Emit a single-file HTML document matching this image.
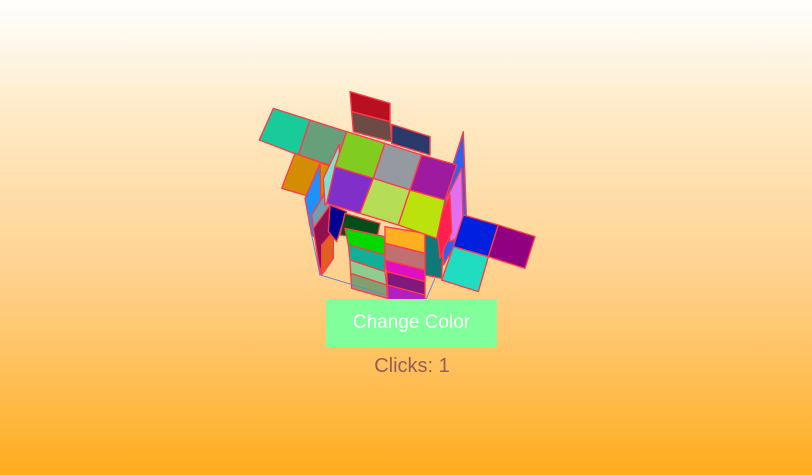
<!DOCTYPE html>
<html><head><style>
html,body{margin:0;padding:0}
body{width:812px;height:475px;overflow:hidden;position:relative;background:linear-gradient(#fff 0%,#ffe9c4 25%,#ffd08a 60%,#ffac1c 100%);font-family:"Liberation Sans",sans-serif}
svg{position:absolute;left:250px;top:85px}
.btn{position:absolute;left:326px;top:299px;width:171px;height:48px;background:#80ff9a;color:#fff;font-size:19px;line-height:48px;text-align:center}
.clk{position:absolute;left:312px;top:355px;width:200px;text-align:center;font-size:20px;color:#9a5a5a}
</style></head><body>
<svg width="300" height="220" viewBox="0 0 900 660">
<g stroke="#ff3a4a" stroke-width="4" stroke-linejoin="round">
<polygon points="70,70 180,105 145,210 28,165" fill="#1acb9a"/>
<polygon points="180,105 290,140 255,245 145,210" fill="#66a07a"/>
<polygon points="135,205 245,245 215,345 95,310" fill="#d48c00"/>
<polygon points="300,20 420,55 420,110 305,80" fill="#b81020"/>
<polygon points="305,80 420,110 425,170 310,140" fill="#6e4a44"/>
<polygon points="425,118 540,155 540,210 425,175" fill="#2a3a6a"/>
<polygon points="165,340 210,235 215,470 185,450" fill="#1e90ff"/>
<polygon points="185,390 240,300 240,470 210,570" fill="#70a0b0"/>
<polygon points="220,280 268,178 268,300 225,360" fill="#80e0d0"/>
<polygon points="190,430 240,360 250,430 210,560" fill="#901050"/>
<polygon points="215,480 250,440 250,520 215,570" fill="#e06020"/>
<polygon points="240,360 290,380 260,470 235,440" fill="#000090"/>
<polygon points="285,385 390,415 380,465 270,450" fill="#034d1a"/>
<polygon points="285,430 405,455 405,510 295,480" fill="#00d800"/>
<polygon points="405,425 525,445 525,505 405,475" fill="#ffb020"/>
<polygon points="295,480 405,510 405,560 300,525" fill="#10b098"/>
<polygon points="405,475 525,505 525,555 405,525" fill="#c07070"/>
<polygon points="300,525 405,560 410,600 302,565" fill="#90cc90"/>
<polygon points="405,525 525,555 525,590 410,560" fill="#e010c0"/>
<polygon points="302,565 410,600 412,640 305,610" fill="#80a070"/>
<polygon points="410,560 525,590 525,630 412,600" fill="#801880"/>
<polygon points="412,600 525,630 525,660 415,660" fill="#b020c0"/>
<polygon points="525,440 580,460 575,580 525,570" fill="#107878"/>
<polygon points="580,330 640,140 650,420 580,540" fill="#3060f0"/>
<polygon points="590,340 635,250 640,450 600,470" fill="#e070f0"/>
<polygon points="560,420 600,330 605,440 570,520" fill="#ff2050"/>
<polygon points="640,390 745,420 715,515 610,485" fill="#0020e0"/>
<polygon points="745,420 855,455 825,550 715,515" fill="#900080"/>
<polygon points="610,485 715,515 685,620 575,585" fill="#20dcc0"/>
<polygon points="290,140 405,175 370,280 255,245" fill="#80cc20"/>
<polygon points="405,175 515,210 480,315 370,280" fill="#949aa0"/>
<polygon points="515,210 620,240 585,345 480,315" fill="#9e1a9e"/>
<polygon points="255,245 370,280 330,385 230,355" fill="#8030c8"/>
<polygon points="370,280 480,315 445,420 330,385" fill="#b5dd55"/>
<polygon points="480,315 585,345 560,460 445,420" fill="#bce20e"/>
</g>
<g stroke="#7080d0" stroke-width="3" fill="none">
<polyline points="185,450 210,570 410,630"/>
<polyline points="555,580 525,650"/>
</g>
</svg>
<div class="btn">Change Color</div>
<div class="clk">Clicks: 1</div>
</body></html>
